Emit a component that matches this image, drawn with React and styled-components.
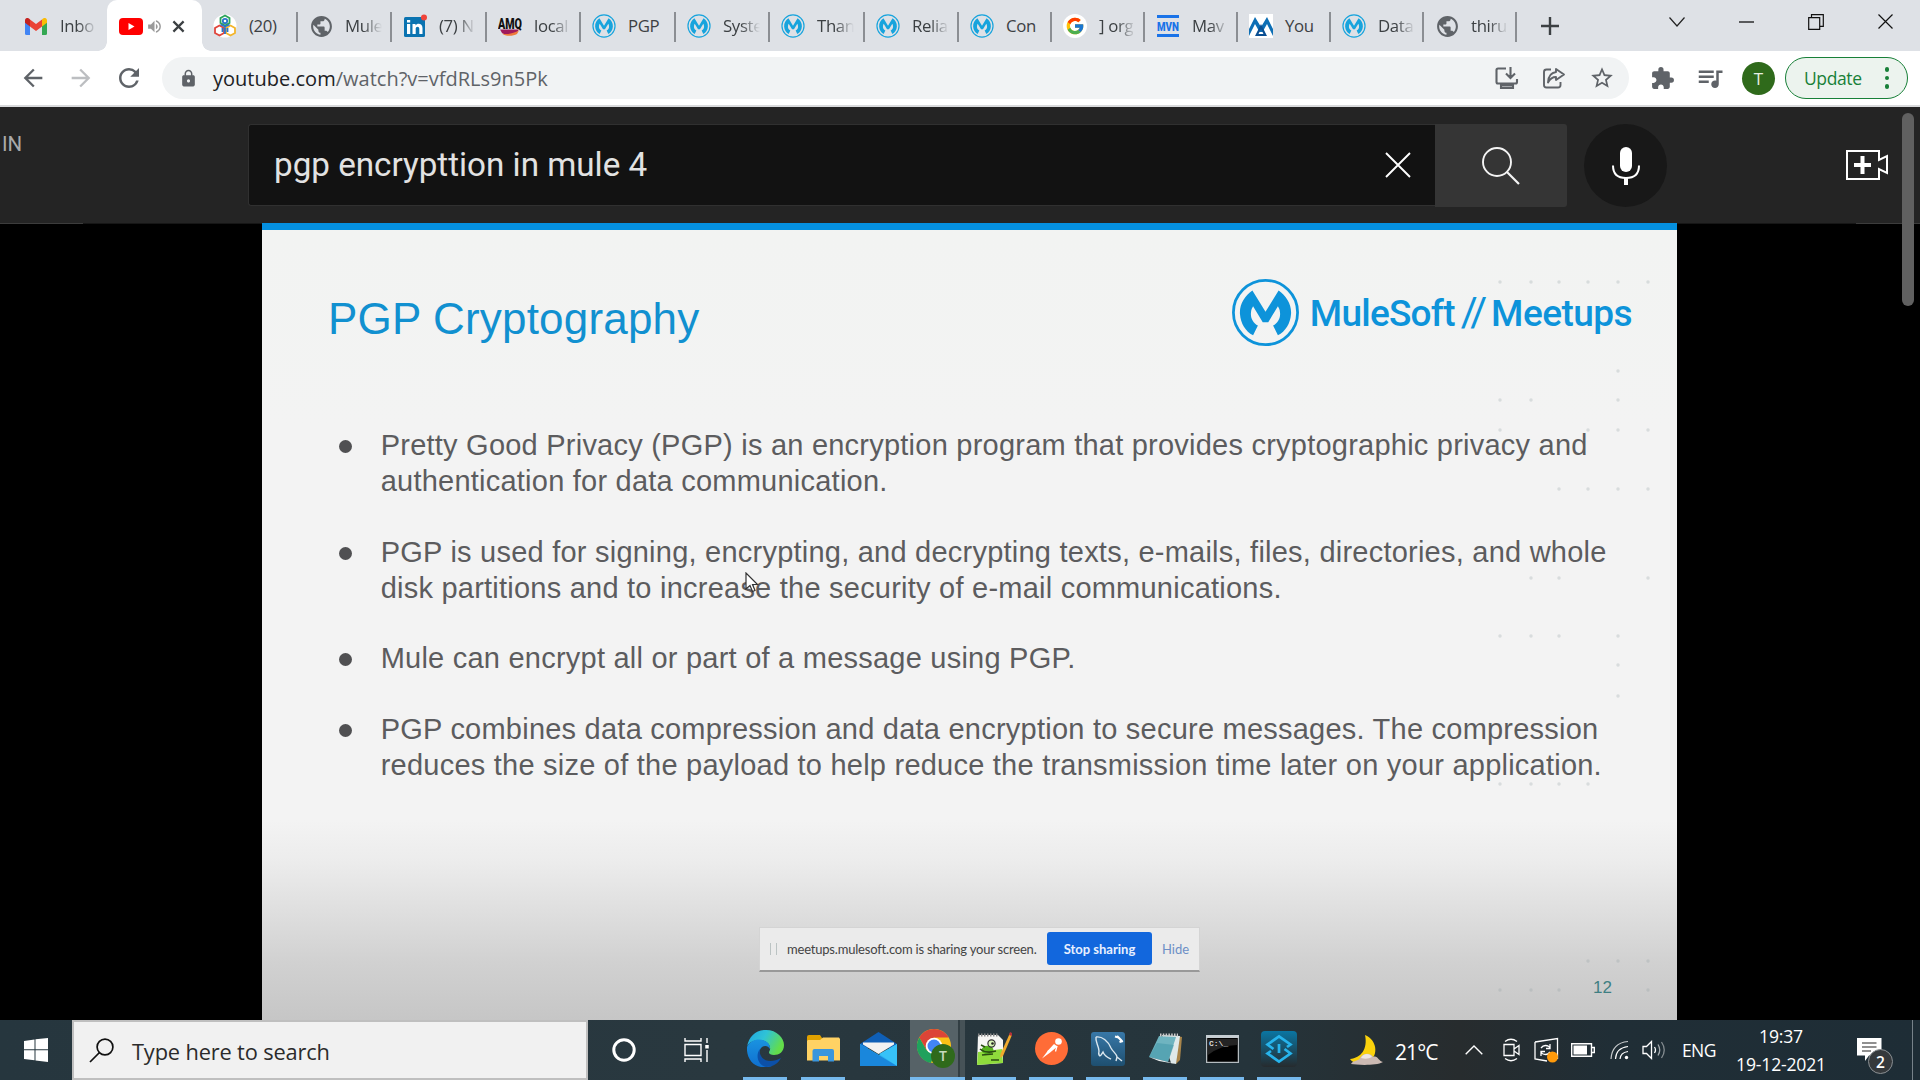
import React from 'react';
import styled, { createGlobalStyle } from 'styled-components';
import {
  MdArrowBack, MdArrowForward, MdRefresh, MdLock, MdStarBorder, MdExtension,
  MdQueueMusic, MdPublic, MdVolumeUp,
} from 'react-icons/md';
import { FcGoogle } from 'react-icons/fc';

const Global = createGlobalStyle`
  * { box-sizing: border-box; }
  body { margin: 0; background: #000; overflow: hidden; }
  svg { display: block; flex: none; }
`;
const UI = `"Open Sans", "Noto Sans", sans-serif`;

const Screen = styled.div`
  width: 1920px; height: 1080px; display: flex; flex-direction: column;
  font-family: ${UI}; overflow: hidden;
`;

/* ---------- browser tabs ---------- */
const TabStrip = styled.div`
  height: 51px; flex: none; display: flex; background: #dee1e6;
`;
const Tab = styled.div`
  width: ${p => p.$w}px; height: 51px; flex: none; display: flex; align-items: center;
  padding: 1px 0 0 ${p => p.$pad ?? 12}px; gap: ${p => p.$gap ?? 12}px;
  background: linear-gradient(#8b8e93, #8b8e93) right 12px / ${p => (p.$line ? '2px 30px' : '0 0')} no-repeat;
`;
const Favicon = styled.div`
  width: 24px; height: 24px; flex: none; display: flex; align-items: center; justify-content: center;
`;
const TabTitle = styled.div`
  white-space: nowrap; font-size: 16.8px; line-height: 26px; letter-spacing: -0.35px; color: #3c4043;
  mask-image: ${p => (p.$whole ? 'none' : 'linear-gradient(90deg, #000 18px, transparent 37px)')};
`;
const ActiveTab = styled.div`
  width: 95px; height: 51px; flex: none; background: #fff; border-radius: 10px 10px 0 0;
  display: flex; align-items: center; padding: 1px 0 0 12px; position: relative;
  &::before, &::after {
    content: ''; position: absolute; bottom: 0; width: 9px; height: 9px;
  }
  &::before { left: -9px; background: radial-gradient(circle at 0 0, transparent 8.5px, #fff 9px); }
  &::after { right: -9px; background: radial-gradient(circle at 100% 0, transparent 8.5px, #fff 9px); }
`;
const TabSound = styled.div`margin-left: 3px; width: 17px; color: #9a9a9a;`;
const TabClose = styled.div`margin-left: 9px;`;
const NewTab = styled.div`width: 66px; display: flex; align-items: center; justify-content: center;`;
const WindowButtons = styled.div`
  margin-left: auto; display: flex; align-items: center; padding: 0 27px 8px 0; gap: 54px;
`;

/* ---------- address bar ---------- */
const Toolbar = styled.div`
  height: 56px; flex: none; display: flex; align-items: center; background: #fff;
  border-bottom: 2px solid #d9dadc; padding: 0 12px 0 19px; color: #5f6368;
`;
const NavButton = styled.div`
  width: 28px; margin-right: ${p => p.$mr}px; display: flex; justify-content: center;
  color: ${p => (p.$dim ? '#bcbec1' : '#5f6368')};
`;
const Omnibox = styled.div`
  width: 1467px; height: 42px; border-radius: 21px; background: #f1f3f4; flex: none;
  display: flex; align-items: center; padding: 0 14px 0 17px;
`;
const Url = styled.div`
  margin-left: 15px; padding-top: 1px; font-size: 20px; letter-spacing: 0.01px; color: #5f6368; line-height: 28px;
  b { font-weight: 400; color: #202124; }
`;
const OmniActions = styled.div`margin-left: auto; display: flex; align-items: center; gap: 23px;`;
const Extensions = styled.div`display: flex; align-items: center; margin-left: 21px; gap: 20px;`;
const Avatar = styled.div`
  width: 33px; height: 33px; border-radius: 50%; background: #2f6a1b; color: #e6eee3;
  display: flex; align-items: center; justify-content: center; font-size: 17px; margin-left: 17px;
`;
const UpdateButton = styled.div`
  width: 123px; height: 42px; margin-left: auto; border-radius: 21px; border: 1.5px solid #188038;
  background: #ecf3ee; color: #188038; display: flex; align-items: center; padding: 0 18px 0 18px;
  font-size: 17.5px; letter-spacing: -0.4px; justify-content: space-between;
`;
const Dots = styled.div`
  display: grid; gap: 4px;
  i { width: 4.4px; height: 4.4px; border-radius: 50%; background: #188038; }
`;

/* ---------- page ---------- */
const Page = styled.div`
  height: 913px; flex: none; position: relative; display: flex; flex-direction: column; background: #000;
`;
const Masthead = styled.div`
  height: 116px; flex: none; background: #242424; display: flex; align-items: flex-start; padding-top: 17px;
  font-family: Roboto, sans-serif;
`;
const Country = styled.div`
  width: 248px; padding: 7px 0 0 2px; font-size: 20.5px; line-height: 26px; color: #aaa;
`;
const SearchBox = styled.div`
  width: 1187px; height: 82px; background: #121212; border: 1px solid #303030; border-right: 0;
  border-radius: 3px 0 0 3px; display: flex; align-items: center; justify-content: space-between;
  padding: 0 24px 1px 25px; font-size: 33.2px; color: #e2e2e2; letter-spacing: 0;
`;
const SearchText = styled.span`padding-bottom: 1px;`;
const SearchButton = styled.div`
  width: 132px; height: 83px; background: #353535; border-radius: 0 3px 3px 0;
  display: flex; align-items: center; justify-content: center;
`;
const Mic = styled.div`
  width: 83px; height: 83px; margin-left: 17px; border-radius: 50%; background: #181818;
  display: flex; align-items: center; justify-content: center;
`;
const Create = styled.div`margin: 26px 0 0 179px;`;
const Divider = styled.div`
  height: 1px; flex: none;
  background: linear-gradient(90deg, #3c3c3c 83px, #161616 83px 1856px, #3c3c3c 1856px);
`;
const Thumb = styled.div`
  position: absolute; right: 6px; top: 6px; width: 12px; height: 193px; border-radius: 6px; background: #606060;
`;
const Slide = styled.div`
  width: 1415px; height: 797px; margin: -1px 0 0 262px; position: relative;
  border-top: 7px solid #0590e0; display: flex; flex-direction: column;
  background: linear-gradient(#f2f3f2 0, #f3f3f3 200px, #f3f3f3 590px, #ececec 632px, #dfdfdf 680px, #d1d1d1 732px, #c6c6c6 790px);
  font-family: "Liberation Sans", Arial, sans-serif;
`;
const SlideHead = styled.div`
  height: 198px; flex: none; display: flex; align-items: flex-start; justify-content: space-between;
  padding: 48px 45px 0 66px; position: relative;
`;
const Title = styled.h1`
  margin: 16px 0 0; font-weight: 400; font-size: 44px; line-height: 50px; color: #1190d0; white-space: nowrap;
  letter-spacing: 0.18px;
`;
const Brand = styled.div`
  display: flex; align-items: center; height: 68px; color: #0d93da; font: 500 37px/50px Roboto, sans-serif;
  white-space: nowrap;
`;
const BrandWord = styled.span`margin-left: ${p => p.$ml}px; padding-top: 3px; letter-spacing: ${p => p.$ls}px;`;
const BrandSlash = styled.span`margin-left: 6px; font-weight: 400; font-size: 41px; letter-spacing: -3px;`;
const DotField = styled.svg`position: absolute; left: 0; top: 0;`;
const Bullets = styled.ul`
  margin: 0; padding: 0; list-style: none; display: flex; flex-direction: column; gap: 34.9px; position: relative;
`;
const Bullet = styled.li`
  display: flex; padding-left: 77px; font-size: 29px; line-height: 35.9px; letter-spacing: 0.23px; color: #5c5c5e;
  white-space: nowrap;
  &::before {
    content: ''; width: 13px; height: 13px; border-radius: 50%; background: #505052; margin: 12px 28.7px 0 0;
  }
`;
const ShareBar = styled.div`
  width: 441px; height: 45px; margin: 142.6px 0 0 497px; background: #ebebeb; border: 1px solid #d4d4d4;
  border-bottom: 2px solid #999; display: flex; align-items: center; position: relative;
  font: 13px/20px Lato, "Open Sans", sans-serif; color: #444; padding-left: 10px;
`;
const Grip = styled.div`width: 7px; height: 12px; border: solid #bbc3c3; border-width: 0 1.5px;`;
const ShareText = styled.div`margin-left: 10px; width: 260px; white-space: nowrap; letter-spacing: -0.2px;`;
const StopButton = styled.div`
  width: 105px; height: 33px; border-radius: 3px; background: #1267dd; color: #e8f0ff; font-weight: 700;
  display: flex; align-items: center; justify-content: center; white-space: nowrap;
`;
const Hide = styled.div`margin-left: 10px; color: #6d8fc6;`;
const PageNumber = styled.div`margin: 6px 0 0 1331px; font-size: 17px; line-height: 20px; color: #3f7f83;`;
const Pointer = styled.svg`position: absolute; left: 483px; top: 342px;`;

/* ---------- taskbar ---------- */
const Taskbar = styled.div`
  height: 60px; flex: none; display: flex; align-items: stretch; color: #fff;
  background: linear-gradient(90deg, #26363e 0, #29383f 38%, #25343b 65%, #272c2e 76%, #202e36 84%, #1e2d36);
`;
const Start = styled.div`width: 72px; display: flex; align-items: center; justify-content: center;`;
const TaskSearch = styled.div`
  width: 516px; background: #f1f1f1; border: 2px solid #bfbfbf; display: flex; align-items: center;
  padding-left: 15px; gap: 18px; color: #2b2b2b; font-size: 21.8px; letter-spacing: -0.15px; white-space: nowrap;
`;
const SearchHint = styled.span`padding-top: 3px;`;
const TaskButton = styled.div`
  width: ${p => p.$w}px; display: flex; align-items: center; justify-content: center; flex: none;
`;
const Apps = styled.div`display: flex; margin-left: 9px;`;
const AppButton = styled.div`
  width: 44px; margin-right: ${p => p.$mr ?? 13}px; flex: none; display: flex; align-items: center; justify-content: center;
  border-bottom: 3px solid ${p => (p.$idle ? 'transparent' : '#76b9ed')};
`;
const ActiveApp = styled(AppButton)`
  width: 55px; padding-right: 3px; background: linear-gradient(90deg, #566267 0 48px, #323e43 48px 50px, #465257 50px);
`;
const Tray = styled.div`display: flex; margin-left: auto; align-items: center; width: 572px; flex: none;`;
const Temp = styled.div`margin-left: 12px; padding-top: 3px; width: 70px; font-size: 21px; letter-spacing: -0.9px; white-space: nowrap;`;
const TrayIcon = styled.div`width: ${p => p.$w}px; flex: none;`;
const Lang = styled.div`width: 53px; font-size: 17.5px; letter-spacing: -0.6px; margin-left: -1px;`;
const Clock = styled.div`
  width: 92px; text-align: center; font-size: 17.6px; line-height: 28px; letter-spacing: -0.2px; white-space: nowrap;
`;
const Notify = styled.div`margin-left: 30px; position: relative; width: 24px; height: 24px;`;
const Count = styled.div`
  position: absolute; left: 11px; top: 11px; width: 25px; height: 25px; border-radius: 50%;
  background: #35393c; border: 1.5px solid #8a8f93; font-size: 15.5px; font-weight: 600;
  display: flex; align-items: center; justify-content: center;
`;
const ShowDesktop = styled.div`margin-left: auto; width: 8px; height: 60px; border-left: 1px solid #77828a;`;

/* ---------- drawings ---------- */
const M_PATH = 'M31 18C20 26 12 38 13 52C14 66 21 77 32 83L39 69C32 65 28 58 29 50C29 46 31 43 32 41L46 64H54L68 41C69 43 71 46 71 50C72 58 68 65 61 69L68 83C79 77 86 66 87 52C88 38 80 26 69 18L50 49Z';
const Mule = ({ size = 24, color = '#18a4dd', ring = 5 }) => (
  <svg width={size} height={size} viewBox="0 0 100 100">
    <circle cx="50" cy="50" r={48.5 - ring / 2} fill="none" stroke={color} strokeWidth={ring} />
    <path d={M_PATH} fill={color} />
  </svg>
);
const Gmail = () => (
  <svg width="22" height="17" viewBox="0 0 22 17">
    <path d="M0 2.5V15.5A1.5 1.5 0 0 0 1.5 17H5V6Z" fill="#4285f4" />
    <path d="M22 2.5V15.5A1.5 1.5 0 0 1 20.500 17H17V6Z" fill="#34a853" />
    <path d="M5 1.500V8.500L11 13L17 8.500V1.500L11 6Z" fill="#ea4335" />
    <path d="M0 2.500C0 .2 2.500-.8 4 .6L5 1.500V8.500L0 4.800Z" fill="#c5221f" />
    <path d="M22 2.500C22 .2 19.500-.8 18 .6L17 1.500V8.500L22 4.800Z" fill="#fbbc04" />
  </svg>
);
const Youtube = () => (
  <svg width="24" height="17" viewBox="0 0 24 17"><rect width="24" height="17" rx="4" fill="#f00" /><path d="M9.500 5L15.500 8.500L9.500 12Z" fill="#fff" /></svg>
);
const Zoho = () => (
  <svg width="24" height="24" viewBox="0 0 24 24" fill="#fff" strokeWidth="1.800">
    <circle cx="12" cy="12" r="11.500" stroke="none" />
    <path d="M12 1.500L16.500 4V9L12 11.500L7.500 9V4Z" stroke="#2aa45a" />
    <path d="M6.500 11.500L11 14V19L6.500 21.500L2 19V14Z" stroke="#e0453c" />
    <path d="M17.500 11.500L22 14V19L17.500 21.500L13 19V14Z" stroke="#f3b52b" />
    <circle cx="12" cy="7" r="2.200" stroke="#2b76c9" />
    <path d="M7.500 10.500L12 12.500L16.500 10.500M12 12.500V20M9.500 14V18M14.500 14V18" stroke="#2b76c9" fill="none" />
  </svg>
);
const LinkedIn = () => (
  <svg width="24" height="24" viewBox="0 0 24 24">
    <rect x="1" y="3" width="21" height="20" rx="1.500" fill="#0a73b1" />
    <path d="M4 10H7.200V20H4ZM4 6H7.200V8.500H4ZM9.500 10H12.500V11.400C14 9 19.500 9 19.500 14V20H16.300V14.700C16.300 12 12.700 12 12.700 14.700V20H9.500Z" fill="#fff" />
    <circle cx="21" cy="3.500" r="3" fill="#f0443a" />
  </svg>
);
const IconText = styled.text`font: ${p => p.$font}; fill: ${p => p.$fill};`;
const Amq = () => (
  <svg width="24" height="22" viewBox="0 0 24 22">
    <IconText x="0" y="13.500" textLength="24" lengthAdjust="spacingAndGlyphs" $font="900 14px Roboto" $fill="#111">AMQ</IconText>
    <path d="M2 14.500H21L18 18.500C14 20.500 7 20.500 4 18Z" fill="#a01a5c" /><path d="M4 18.500C9 20 15 18.500 21 15.500L19 19C15 21.500 7 21.500 4 18.500Z" fill="#ef7a3a" />
  </svg>
);
const Mvn = () => (
  <svg width="22" height="22" viewBox="0 0 22 22">
    <path d="M0 0H22V3H0ZM0 19H22V22H0Z" fill="#1a73e8" />
    <IconText x="0" y="15.500" textLength="22" lengthAdjust="spacingAndGlyphs" $font="900 12px Roboto" $fill="#1a73e8">MVN</IconText>
  </svg>
);
const Peaks = () => (
  <svg width="24" height="24" viewBox="0 0 24 24">
    <rect width="24" height="24" fill="#fff" />
    <path d="M0 22V15L6 3L12 13L18 3L24 15V22L18 10L13.500 18H10.500L6 10Z" fill="#0e6fb5" />
    <path d="M12 10L18 22H6ZM12 15L9.500 20H14.500Z" fill="#0b4f93" fillRule="evenodd" />
  </svg>
);
const Goog = () => (
  <svg width="24" height="24" viewBox="0 0 24 24"><circle cx="12" cy="12" r="12" fill="#fff" /><FcGoogle x="2" y="2" size={20} /></svg>
);
const Globe = () => <MdPublic size={25} color="#5f6368" />;

const TABS = [
  { w: 94, t: 'Mule', i: <Globe /> },
  { w: 95, t: '(7) N', i: <LinkedIn /> },
  { w: 94, t: 'local', i: <Amq /> },
  { w: 95, t: 'PGP', i: <Mule />, whole: true },
  { w: 94, t: 'Syste', i: <Mule /> },
  { w: 95, t: 'Than', i: <Mule /> },
  { w: 94, t: 'Relia', i: <Mule /> },
  { w: 93, t: 'Con', i: <Mule />, whole: true },
  { w: 93, t: '] org', i: <Goog /> },
  { w: 93, t: 'Mav', i: <Mvn /> },
  { w: 93, t: 'You', i: <Peaks />, whole: true },
  { w: 93, t: 'Data', i: <Mule /> },
  { w: 93, t: 'thiru', i: <Globe /> },
];

const COLS = [1500, 1531, 1559, 1588, 1618, 1648];
const DOT_ROWS = [
  [282, [0, 1, 2, 3, 4, 5]], [371, [4]], [400, [0, 1, 4]], [430, [0, 3, 4, 5]], [489, [2, 3, 4, 5]],
  [578, [1, 2, 5]], [636, [0, 1, 2, 4]], [665, [4]], [696, [4]], [784, [0, 1, 2, 3]],
  [961, [3, 4, 5]], [990, [0, 1, 2, 5]],
];

const Edge = () => (
  <svg width="37" height="37" viewBox="0 0 37 37">
    <defs>
      <linearGradient id="ea" x1="0" y1="0" x2="1" y2=".4"><stop offset="0" stopColor="#1fa4e4" /><stop offset=".5" stopColor="#2fc3d6" /><stop offset="1" stopColor="#63dd4a" /></linearGradient>
      <linearGradient id="eb" x1="0" y1="0" x2="0" y2="1"><stop offset="0" stopColor="#1a93e0" /><stop offset="1" stopColor="#0f6fd0" /></linearGradient>
    </defs>
    <path d="M0 17C2 6 9 0 19 0C30 0 37 8 37 15C37 22 32 25 27 25C23 25 21 23.500 22.500 21C25 16 20 10 13 10C6 10 1 13 0 17Z" fill="url(#ea)" />
    <path d="M0 17C2 12 7 9.500 12 9.500C19 9.500 24 14.500 22.800 19C21 14 13 15 12.500 22C12 30 19 36 25 36C10 41-1 31 0 17Z" fill="url(#eb)" />
    <path d="M13 19C11 29 22 35 34 28C31 34 25 37 19 37C11 35 8 25 13 19Z" fill="#0c50a8" />
  </svg>
);
const Explorer = () => (
  <svg width="33" height="27" viewBox="0 0 33 27">
    <path d="M0 2Q0 0 2 0H13L15 3V8H0Z" fill="#e0a100" /><path d="M1 5H13L16 2.500H32L33 4V25.500H0V6Z" fill="#ffd264" />
    <path d="M5.500 26.500V16Q5.500 14 7.500 14H25Q27 14 27 16V26.500H21V21H12V26.500Z" fill="#3a96dd" />
  </svg>
);
const Mail = () => (
  <svg width="37" height="34" viewBox="0 0 37 34">
    <path d="M0 12L18.500 0L37 12V16H0Z" fill="#0f5fb6" /><path d="M0 12L19 23L37 12V34H0Z" fill="#2bb0f0" />
    <path d="M37 12V34L19 22Z" fill="#37c2f8" /><path d="M0 12L37 34H0Z" fill="#1a87dc" />
    <path d="M3 10.500H34V12.500L18.500 22L3 12.500Z" fill="#f2f2f2" />
  </svg>
);
const Chrome = () => (
  <svg width="39" height="39" viewBox="0 0 39 39">
    <circle cx="17" cy="17" r="17" fill="#fbc116" />
    <path d="M2.300 8.500A17 17 0 0 1 31.700 8.500H17L9.600 21.300Z" fill="#dc4437" />
    <path d="M2.300 8.500L9.600 21.300L17 25.500L14 34A17 17 0 0 1 2.300 8.500Z" fill="#1fa15d" />
    <circle cx="17" cy="17" r="8.300" fill="#fff" /><circle cx="17" cy="17" r="6.500" fill="#4285f4" />
    <circle cx="26" cy="27" r="12" fill="#2f6a1b" />
    <IconText x="26" y="32" textAnchor="middle" $font="600 14px Open Sans" $fill="#c7dbbf">T</IconText>
  </svg>
);
const NotepadPP = () => (
  <svg width="35" height="34" viewBox="0 0 35 34">
    <path d="M1 3H21L26 8V31L0 33Z" fill="#f6f6f4" /><path d="M1 20L25 17L26 31L0 33Z" fill="#8fdc3c" />
    <path d="M1 3H22" stroke="#888" strokeWidth="3" strokeDasharray="1.500 1.500" />
    <ellipse cx="10.500" cy="18" rx="6" ry="4.300" fill="#57b31e" /><circle cx="14.500" cy="11.500" r="3.600" fill="#d9f6b7" stroke="#333" strokeWidth="1.200" />
    <circle cx="15.500" cy="11.500" r="1.300" fill="#222" /><path d="M3 17Q9 22 19 19M5 23L16 22M14 28H22M8 15L4 13" stroke="#2b4d12" strokeWidth="1.500" fill="none" />
    <path d="M33 1L35 3L26 24L23 26L23.500 22Z" fill="#f0a92c" /><path d="M33 0L35 1V4L32 3Z" fill="#b4323a" />
  </svg>
);
const Postman = () => (
  <svg width="33" height="33" viewBox="0 0 33 33">
    <circle cx="16.500" cy="16.500" r="16.500" fill="#ff6c37" /><circle cx="23.500" cy="9.500" r="3.300" fill="#fff" />
    <path d="M19 12L22.500 14.500L14.500 21L7 26.500L13 18.500Z" fill="#fff" /><path d="M12.500 19.500L15.500 18M22 14L20.500 19.500" stroke="#fff" strokeWidth="1.300" fill="none" />
  </svg>
);
const Workbench = () => (
  <svg width="34" height="34" viewBox="0 0 34 34">
    <defs><linearGradient id="wb" x1="0" y1="0" x2="0" y2="1"><stop offset="0" stopColor="#3878a8" /><stop offset="1" stopColor="#1e4f70" /></linearGradient></defs>
    <rect width="34" height="34" rx="3" fill="url(#wb)" />
    <path d="M5 5C11 4 17 9 20 16C22 20 26 22 26 25L31 29M26 25L25 29M5 5C4 10 8 14 8 19C7 23 9 25 10 23L12 20C14 25 18 26 20 27" stroke="#dce8ef" strokeWidth="1.400" fill="none" />
    <path d="M26 4L30.500 8.500M24 4.500L27.500 5.500M28.500 10L32 9" stroke="#fff" strokeWidth="2.200" />
  </svg>
);
const Notepad = () => (
  <svg width="33" height="32" viewBox="0 0 33 32">
    <path d="M28 3L33 4L31 27L27 31Z" fill="#a9854b" /><path d="M13 2L31 3L27 31L22 30Z" fill="#dfe9ea" />
    <path d="M10 3L27 4L19 29L0 24Z" fill="#6fb4c0" /><path d="M8 10L25 12L19 29L0 24Z" fill="#3d93a5" opacity=".5" />
    <path d="M11 2H29" stroke="#ccc" strokeWidth="3" strokeDasharray="1.500 1.300" /><path d="M0 24L19 29L27 31L10 28Z" fill="#f2f6f6" />
  </svg>
);
const Cmd = () => (
  <svg width="33" height="28" viewBox="0 0 33 28">
    <rect x=".5" y=".5" width="32" height="27" fill="#000" stroke="#b5bcc0" strokeWidth="1.500" /><rect width="33" height="3" fill="#c5cdd2" />
    <path d="M2 4H31V10Q15 10 2 20Z" fill="#3c3c3c" opacity=".6" />
    <IconText x="3" y="10.500" $font="700 8px Liberation Mono" $fill="#ddd">C:\_</IconText>
  </svg>
);
const Studio = () => (
  <svg width="36" height="36" viewBox="0 0 36 36">
    <defs><linearGradient id="st" x1="0" y1="0" x2="0" y2="1"><stop offset="0" stopColor="#0a76a3" /><stop offset="1" stopColor="#262b2e" /></linearGradient></defs>
    <rect width="36" height="36" rx="4" fill="url(#st)" />
    <path d="M12.500 18L6.500 13.500L18 5.500L29.500 13.500L26 16M23.500 18L29.500 22.500L18 30.500L6.500 22.500L10 20M18 13V22" fill="none" stroke="#27b4ec" strokeWidth="2.700" />
  </svg>
);

export default function App() {
  return (
    <Screen>
      <Global />
      <TabStrip>
        <Tab $w={107} $pad={24} $gap={12}>
          <Favicon><Gmail /></Favicon><TabTitle>Inbo</TabTitle>
        </Tab>
        <ActiveTab>
          <Youtube />
          <TabSound><MdVolumeUp size={17} /></TabSound>
          <TabClose>
            <svg width="13" height="13" viewBox="0 0 14 14"><path d="M1.500 1.500L12.500 12.500M12.500 1.500L1.500 12.500" stroke="#3c4043" strokeWidth="2.400" /></svg>
          </TabClose>
        </ActiveTab>
        <Tab $w={96} $line $pad={11} $gap={12}><Favicon><Zoho /></Favicon><TabTitle $whole>(20)</TabTitle></Tab>
        {TABS.map((tab, n) => (
          <Tab key={n} $w={tab.w} $pad={11} $line>
            <Favicon>{tab.i}</Favicon><TabTitle $whole={tab.whole}>{tab.t}</TabTitle>
          </Tab>
        ))}
        <NewTab><svg width="18" height="18" viewBox="0 0 18 18"><path d="M9 0V18M0 9H18" stroke="#3c4043" strokeWidth="2.400" /></svg></NewTab>
        <WindowButtons>
          <svg width="16" height="10" viewBox="0 0 16 10"><path d="M.5 .5L8 9L15.500 .5" fill="none" stroke="#222" strokeWidth="1.200" /></svg>
          <svg width="15" height="2" viewBox="0 0 15 2"><path d="M0 1H15" stroke="#111" strokeWidth="1.300" /></svg>
          <svg width="16" height="16" viewBox="0 0 16 16"><path d="M.7 3.700H11.700V15.300H.7ZM3.500 3.500V.7H15.300V12.300H12" fill="none" stroke="#111" strokeWidth="1.200" /></svg>
          <svg width="15" height="15" viewBox="0 0 15 15"><path d="M.5 .5L14.500 14.500M14.500 .5L.5 14.500" stroke="#111" strokeWidth="1.200" /></svg>
        </WindowButtons>
      </TabStrip>

      <Toolbar>
        <NavButton $mr={20}><MdArrowBack size={28} /></NavButton>
        <NavButton $mr={20} $dim><MdArrowForward size={28} /></NavButton>
        <NavButton $mr={19}><MdRefresh size={30} /></NavButton>
        <Omnibox>
          <MdLock size={19} />
          <Url><b>youtube.com</b>/watch?v=vfdRLs9n5Pk</Url>
          <OmniActions>
            <svg width="24" height="22" viewBox="0 0 24 22"><path d="M11 1.500H3Q1.500 1.500 1.500 3V15Q1.500 16.500 3 16.500H20.500Q22 16.500 22 15V12M6 18.500H18V21H6ZM15.500 0V10M11 6.500L15.500 11L20 6.500" fill="none" stroke="#5f6368" strokeWidth="2.100" /></svg>
            <svg width="24" height="22" viewBox="0 0 24 22"><path d="M9 2.500H4.500Q2 2.500 2 5V18Q2 20.500 4.500 20.500H16Q18.500 20.500 18.500 18V15" fill="none" stroke="#5f6368" strokeWidth="1.900" /><path d="M14 2L22 7.500L14 13V10Q9 10 6 15.500Q6.500 6 14 5Z" fill="none" stroke="#5f6368" strokeWidth="1.900" strokeLinejoin="round" /></svg>
            <MdStarBorder size={26} />
          </OmniActions>
        </Omnibox>
        <Extensions><MdExtension size={25} /><MdQueueMusic size={30} /></Extensions>
        <Avatar>T</Avatar>
        <UpdateButton>Update<Dots><i /><i /><i /></Dots></UpdateButton>
      </Toolbar>

      <Page>
        <Masthead>
          <Country>IN</Country>
          <SearchBox>
            <SearchText>pgp encrypttion in mule 4</SearchText>
            <svg width="26" height="26" viewBox="0 0 26 26"><path d="M1 1L25 25M25 1L1 25" stroke="#fff" strokeWidth="1.900" /></svg>
          </SearchBox>
          <SearchButton>
            <svg width="38" height="38" viewBox="0 0 38 38" fill="none" stroke="#f4f4f4" strokeWidth="1.900"><circle cx="15" cy="15" r="14" /><path d="M25 25L37 37" strokeWidth="2.200" /></svg>
          </SearchButton>
          <Mic>
            <svg width="28" height="38" viewBox="0 0 28 38"><rect x="8" y="0" width="12" height="25" rx="6" fill="#fff" /><path d="M1 18.500Q1 31 14 31Q27 31 27 18.500" fill="none" stroke="#fff" strokeWidth="2" /><path d="M14 31V38" stroke="#fff" strokeWidth="4" /></svg>
          </Mic>
          <Create>
            <svg width="43" height="30" viewBox="0 0 43 30"><path d="M1 1H33V10L41 6V23L33 19V29H1Z" fill="none" stroke="#fff" strokeWidth="2" /><path d="M16.500 6V24M8 15H25" stroke="#fff" strokeWidth="4" /></svg>
          </Create>
        </Masthead>
        <Divider />
        <Slide>
          <DotField width="1415" height="790" fill="#8a9a9e" fillOpacity=".26">
            {DOT_ROWS.map(([y, cols]) => cols.map(c => <circle key={`${y}-${c}`} cx={COLS[c] - 262} cy={y - 230} r="1.700" />))}
          </DotField>
          <SlideHead>
            <Title>PGP Cryptography</Title>
            <Brand>
              <Mule size={69} color="#0d93da" ring={4} />
              <BrandWord $ml={10} $ls={-0.75}>MuleSoft</BrandWord>
              <BrandSlash>//</BrandSlash>
              <BrandWord $ml={7} $ls={-0.55}>Meetups</BrandWord>
            </Brand>
          </SlideHead>
          <Bullets>
            <Bullet><span>Pretty Good Privacy (PGP) is an encryption program that provides cryptographic privacy and<br />authentication for data communication.</span></Bullet>
            <Bullet><span>PGP is used for signing, encrypting, and decrypting texts, e-mails, files, directories, and whole<br />disk partitions and to increase the security of e-mail communications.</span></Bullet>
            <Bullet><span>Mule can encrypt all or part of a message using PGP.</span></Bullet>
            <Bullet><span>PGP combines data compression and data encryption to secure messages. The compression<br />reduces the size of the payload to help reduce the transmission time later on your application.</span></Bullet>
          </Bullets>
          <ShareBar>
            <Grip />
            <ShareText>meetups.mulesoft.com is sharing your screen.</ShareText>
            <StopButton>Stop sharing</StopButton>
            <Hide>Hide</Hide>
          </ShareBar>
          <PageNumber>12</PageNumber>
          <Pointer width="15" height="22" viewBox="0 0 15 22"><path d="M1 1V17L5 13.500L7.500 19.500L10 18.500L7.500 12.500H12.500Z" fill="#fff" stroke="#333" strokeWidth="1.200" /></Pointer>
        </Slide>
        <Thumb />
      </Page>

      <Taskbar>
        <Start><svg width="24" height="24" viewBox="0 0 24 24" fill="#fff"><path d="M0 3L10.500 1.500V11.300H0ZM11.500 1.300L24 0V11.300H11.500ZM0 12.300H10.500V22.300L0 21ZM11.500 12.300H24V24L11.500 22.500Z" /></svg></Start>
        <TaskSearch>
          <svg width="25" height="25" viewBox="0 0 25 25" fill="none" stroke="#111" strokeWidth="1.700"><circle cx="16" cy="9" r="7.900" /><path d="M10.500 14.500L1 24" /></svg>
          <SearchHint>Type here to search</SearchHint>
        </TaskSearch>
        <TaskButton $w={72}><svg width="24" height="24" viewBox="0 0 24 24"><circle cx="12" cy="12" r="10.200" fill="none" stroke="#fff" strokeWidth="3" /></svg></TaskButton>
        <TaskButton $w={74}>
          <svg width="26" height="24" viewBox="0 0 26 24" fill="none" stroke="#fff" strokeWidth="1.400"><path d="M1 0V3H17V0M1 6.500H17V17.500H1ZM1 24V21H17V24M23 0V5M23 12V24" /><path d="M23 7V10.500" strokeWidth="3.500" /></svg>
        </TaskButton>
        <Apps>
          <AppButton $mr={14}><Edge /></AppButton>
          <AppButton $mr={11}><Explorer /></AppButton>
          <AppButton $mr={10} $idle><Mail /></AppButton>
          <ActiveApp $mr={7}><Chrome /></ActiveApp>
          <AppButton><NotepadPP /></AppButton>
          <AppButton><Postman /></AppButton>
          <AppButton><Workbench /></AppButton>
          <AppButton><Notepad /></AppButton>
          <AppButton><Cmd /></AppButton>
          <AppButton $mr={0}><Studio /></AppButton>
        </Apps>
        <Tray>
          <svg width="35" height="30" viewBox="0 0 35 30"><path d="M17 0C29 5 31 20 21 27C14 30 5 29 2 24C13 23 20 14 17 0Z" fill="#fbd20c" /><path d="M3 29C5 25 11 26 12 23C15 17 24 18 25 22C30 20 30 26 35 27C28 31 9 30 3 29Z" fill="#cbb9b2" /><path d="M13 23C15 18 22 18 24 22Q19 25 13 23Z" fill="#eee6e2" /></svg>
          <Temp>21°C</Temp>
          <TrayIcon $w={38}><svg width="18" height="10" viewBox="0 0 18 10"><path d="M.7 9.300L9 1L17.300 9.300" fill="none" stroke="#fff" strokeWidth="1.400" /></svg></TrayIcon>
          <TrayIcon $w={31}><svg width="17" height="24" viewBox="0 0 17 24" fill="none" stroke="#fff" strokeWidth="1.300"><path d="M1 6.500H11V17.500H1ZM11 11L16 7.500V16.500L11 13M2 3.500Q8-1 14 3.500M2 20.500Q8 25 14 20.500" /></svg></TrayIcon>
          <TrayIcon $w={37}><svg width="25" height="26" viewBox="0 0 25 26" fill="none" stroke="#fff" strokeWidth="1.300"><path d="M1 5L23.500 1.500V22M1 5V22L13 24M7 11Q10 7 15 9.500L16 11.500M16 7V11.500H12M16 15Q13 19 8 16.500L7 14.500M7 19V14.500H11" /><circle cx="18.500" cy="20" r="5.500" fill="#ff9a0b" stroke="none" /></svg></TrayIcon>
          <TrayIcon $w={39}><svg width="24" height="14" viewBox="0 0 24 14"><path d="M.7 .7H20.500V13.300H.7ZM21 4.500H23.300V9.500H21" fill="none" stroke="#fff" strokeWidth="1.400" /><path d="M2.500 2.500H16V11.500H2.500Z" fill="#fff" /></svg></TrayIcon>
          <TrayIcon $w={32}><svg width="20" height="20" viewBox="0 0 20 20" fill="none" stroke="#fff" strokeWidth="1.200"><path d="M1 19Q2 3 18 1.500" opacity=".75" /><path d="M5.500 19Q6 8 18 6.500M10 19Q10.500 12.500 18 11.500" /><circle cx="16.500" cy="17.500" r="1.700" fill="#fff" stroke="none" /></svg></TrayIcon>
          <TrayIcon $w={41}><svg width="24" height="20" viewBox="0 0 24 20" fill="none" stroke="#fff" strokeWidth="1.300"><path d="M1 6.500H4.500L9.500 1.500V18.500L4.500 13.500H1ZM12.500 7Q14.500 10 12.500 13" /><path d="M16 4.500Q19.500 10 16 15.500" opacity=".6" /><path d="M19.500 2Q25 10 19.500 18" opacity=".45" /></svg></TrayIcon>
          <Lang>ENG</Lang>
          <Clock>19:37<br />19-12-2021</Clock>
          <Notify>
            <svg width="25" height="24" viewBox="0 0 25 24"><path d="M0 0H24.500V17.500H12L8 23V17.500H0Z" fill="#fff" /><path d="M5 5H19.500M5 9H19.500M5 13H14" stroke="#222" strokeWidth="1.200" /></svg>
            <Count>2</Count>
          </Notify>
          <ShowDesktop />
        </Tray>
      </Taskbar>
    </Screen>
  );
}
